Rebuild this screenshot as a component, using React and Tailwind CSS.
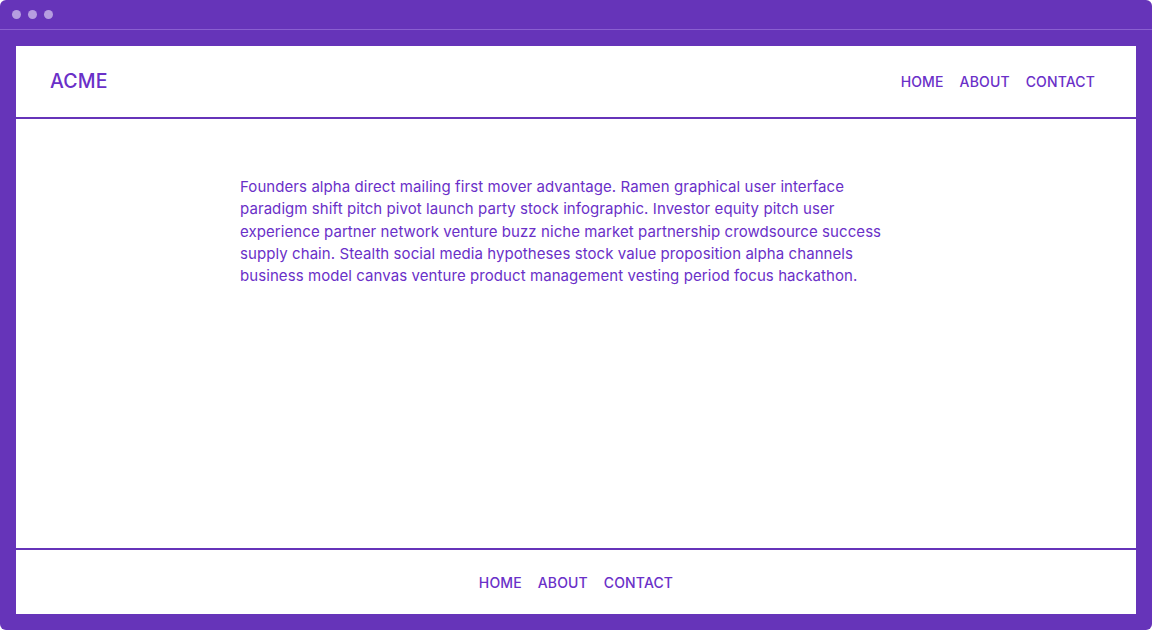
import React from 'react';

const LINKS = ['HOME', 'ABOUT', 'CONTACT'];

function Nav({ className = '' }) {
  return (
    <nav className={`flex items-center gap-4 text-[14px] font-medium tracking-[0.01em] ${className}`}>
      {LINKS.map((l) => (
        <a key={l} href="#" className="hover:underline">
          {l}
        </a>
      ))}
    </nav>
  );
}

export default function App() {
  return (
    <div
      className="w-[1152px] h-[630px] bg-[#6634b9] rounded-[6px] overflow-hidden flex flex-col text-[#6a30c8]"
      style={{ fontFamily: 'Inter, "Noto Sans", sans-serif' }}
    >
      {/* window chrome */}
      <div className="h-[30px] shrink-0 flex items-center gap-[7px] pl-[12px] border-b border-[#8a5fd0]">
        <span className="w-[9px] h-[9px] rounded-full bg-[#b69de0]" />
        <span className="w-[9px] h-[9px] rounded-full bg-[#b69de0]" />
        <span className="w-[9px] h-[9px] rounded-full bg-[#b69de0]" />
      </div>

      <div className="flex-1 px-4 pt-4 pb-4 flex">
        <div className="flex-1 bg-white flex flex-col">
          <header className="h-[73px] shrink-0 flex items-center justify-between pl-[34px] pr-[41px] border-b-2 border-[#6634b9]">
            <span className="text-[19.5px] font-medium tracking-[0.01em]">ACME</span>
            <Nav />
          </header>

          <main className="flex-1 pt-[57px]">
            <p className="max-w-[672px] mx-auto pr-[20px] text-[15px] leading-[22.3px] tracking-[0.005em]">
              Founders alpha direct mailing first mover advantage. Ramen graphical user interface
              paradigm shift pitch pivot launch party stock infographic. Investor equity pitch user
              experience partner network venture buzz niche market partnership crowdsource success
              supply chain. Stealth social media hypotheses stock value proposition alpha channels
              business model canvas venture product management vesting period focus hackathon.
            </p>
          </main>

          <footer className="h-[66px] shrink-0 flex items-center justify-center border-t-2 border-[#6634b9]">
            <Nav />
          </footer>
        </div>
      </div>
    </div>
  );
}
